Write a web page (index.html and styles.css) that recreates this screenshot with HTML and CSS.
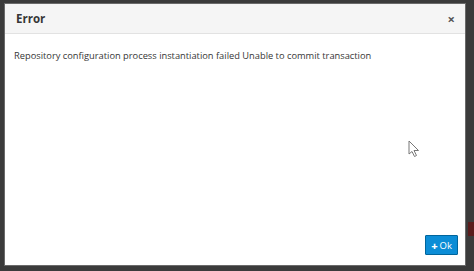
FILE: index.html
```html
<!DOCTYPE html>
<html>
<head>
<meta charset="utf-8">
<link rel="stylesheet" href="styles.css">
</head>
<body>
<div class="backdrop">
  <div class="modal">
    <div class="modal-header">
      <span class="title">Error</span>
      <span class="close">×</span>
    </div>
    <div class="modal-body">
      <p class="message">Repository configuration process instantiation failed Unable to commit transaction</p>
      <svg class="cursor" width="12" height="18" viewBox="0 0 12 18"><path d="M1 1 L1 14 L4 11.5 L6.5 16.5 L8.5 15.5 L6 10.5 L10.5 10.5 Z" fill="#fff" stroke="#777" stroke-width="1"/></svg>
    </div>
    <div class="modal-footer">
      <button class="btn-ok"><span class="plus">+</span>Ok</button>
    </div>
  </div>
  <div class="side-accent"></div>
</div>
</body>
</html>
```
FILE: styles.css
```css
html, body { margin: 0; padding: 0; }
body {
  width: 474px; height: 271px; overflow: hidden;
  background: #3a3a3a;
  font-family: "Open Sans", "Liberation Sans", sans-serif;
}
.backdrop {
  position: relative;
  width: 474px; height: 271px;
  box-sizing: border-box;
  padding: 3px 8px 5px 4px;
  background: #3b3b3b;
}
.modal {
  position: relative;
  z-index: 1;
  height: 100%;
  background: #fff;
  display: flex; flex-direction: column;
  border: 1px solid #6a6a6a;
  box-sizing: border-box;
}
.modal-header {
  height: 30px;
  box-sizing: border-box;
  background: #f5f5f5;
  border-bottom: 1px solid #e2e2e2;
  display: flex; align-items: center; justify-content: space-between;
  padding: 0 10px 0 11px;
}
.title { font-weight: 700; font-size: 11.5px; color: #363636; }
.close { font-weight: 700; font-size: 13px; color: #555; }
.modal-body { flex: 1; position: relative; padding: 0 9px; }
.message { margin: 15px 0 0; font-size: 9.3px; color: #363636; }
.cursor { position: absolute; left: 403px; top: 106px; }
.modal-footer { display: flex; justify-content: flex-end; padding: 0 7px 10px 0; }
.btn-ok {
  background: #0c8dd6; color: #fff; border: 1px solid #00659c;
  border-radius: 1px; font-family: inherit; font-size: 9.5px;
  height: 20px; padding: 0 5px; display: flex; align-items: center;
}
.plus { font-weight: 800; font-size: 11px; margin-right: 2px; }
.side-accent { position: absolute; right: 0; top: 222px; width: 6px; height: 14px; background: #5a1c1c; }
```
